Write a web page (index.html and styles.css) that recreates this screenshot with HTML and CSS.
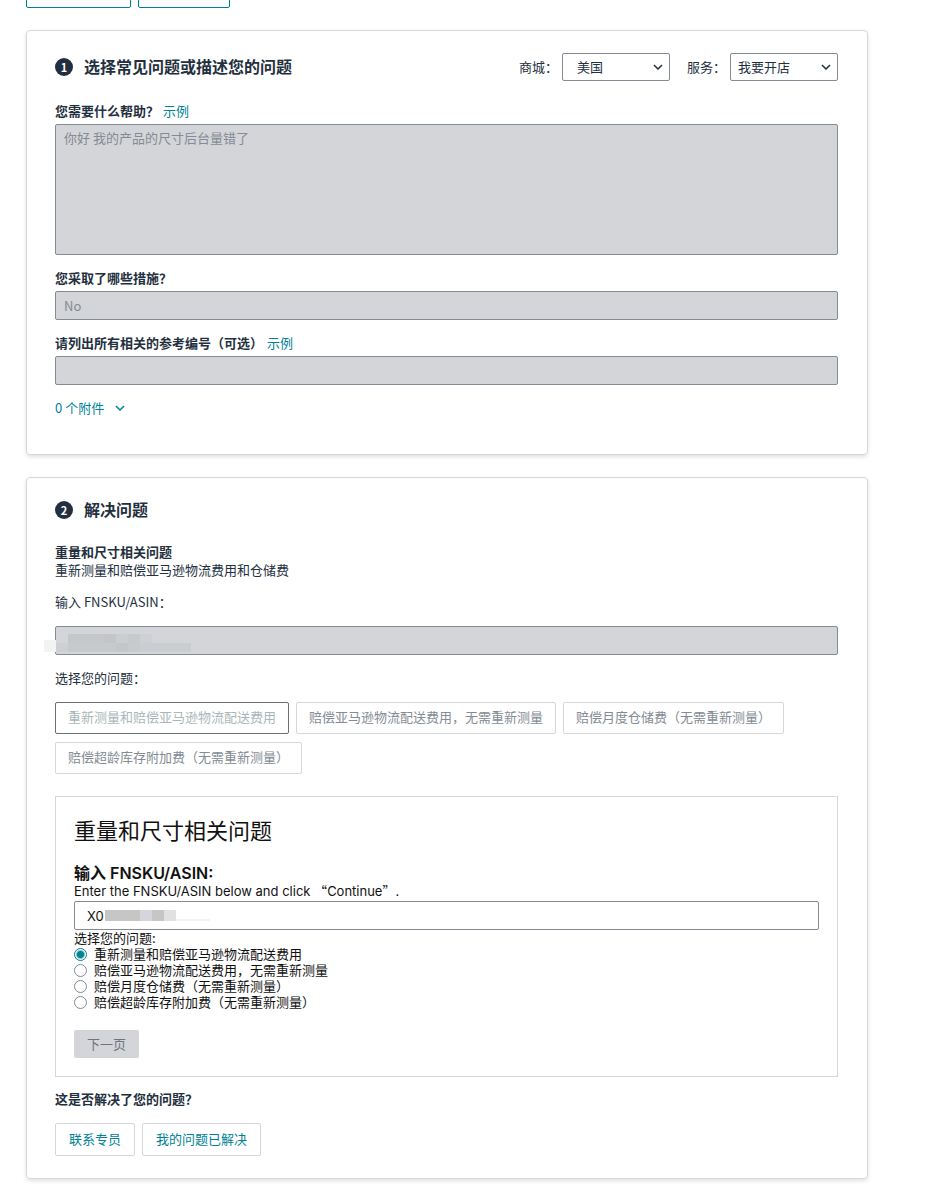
FILE: index.html
```html
<!DOCTYPE html>
<html lang="zh-CN">
<head>
    <meta charset="UTF-8">
    <meta name="viewport" content="width=device-width, initial-scale=1.0">
    <title>获取支持</title>
    <link rel="stylesheet" href="styles.css">
</head>
<body>
    <main class="page">
        <div class="top-actions">
            <button type="button" class="btn-top btn-top-wide" aria-label="返回"></button>
            <button type="button" class="btn-top" aria-label="帮助"></button>
        </div>

        <section class="card card-describe">
            <div class="card-header">
                <span class="step">1</span>
                <h2>选择常见问题或描述您的问题</h2>
                <div class="filters">
                    <label for="store">商城：</label>
                    <div class="select-wrap">
                        <select id="store" class="indent"><option>美国</option></select>
                        <svg class="chevron" viewBox="0 0 10 6" width="10" height="6"><path d="M1 1l4 4 4-4"/></svg>
                    </div>
                    <label for="service">服务：</label>
                    <div class="select-wrap">
                        <select id="service"><option>我要开店</option></select>
                        <svg class="chevron" viewBox="0 0 10 6" width="10" height="6"><path d="M1 1l4 4 4-4"/></svg>
                    </div>
                </div>
            </div>

            <div class="field">
                <div class="field-label"><label for="help">您需要什么帮助？</label><a href="#">示例</a></div>
                <textarea id="help" disabled>你好 我的产品的尺寸后台量错了</textarea>
            </div>
            <div class="field">
                <div class="field-label"><label for="steps">您采取了哪些措施？</label></div>
                <input type="text" id="steps" value="No" disabled>
            </div>
            <div class="field">
                <div class="field-label"><label for="refs">请列出所有相关的参考编号（可选）</label><a href="#">示例</a></div>
                <input type="text" id="refs" disabled>
            </div>
            <a href="#" class="attachments">0 个附件
                <svg class="chevron-link" viewBox="0 0 10 6" width="10" height="6"><path d="M1 1l4 4 4-4"/></svg>
            </a>
        </section>

        <section class="card card-solve">
            <div class="card-header">
                <span class="step">2</span>
                <h2>解决问题</h2>
            </div>

            <h3>重量和尺寸相关问题</h3>
            <p>重新测量和赔偿亚马逊物流费用和仓储费</p>

            <label for="asin" class="asin-label">输入 FNSKU/ASIN：</label>
            <div class="masked">
                <input type="text" id="asin" disabled>
                <svg class="mask-disabled" viewBox="0 0 147 18" width="147" height="18">
                    <rect x="0" y="6" width="12" height="12" fill="#f3f3f4"/>
                    <rect x="24" y="0" width="36" height="9" fill="#c4c8cb"/>
                    <rect x="60" y="0" width="12" height="9" fill="#c4c5c9"/>
                    <rect x="72" y="0" width="12" height="9" fill="#caced1"/>
                    <rect x="84" y="0" width="12" height="9" fill="#c6cacd"/>
                    <rect x="96" y="0" width="12" height="9" fill="#cdd0d4"/>
                    <rect x="12" y="9" width="12" height="9" fill="#cdcfd3"/>
                    <rect x="24" y="9" width="48" height="9" fill="#c6cacd"/>
                    <rect x="72" y="9" width="12" height="9" fill="#c3c7ca"/>
                    <rect x="84" y="9" width="12" height="9" fill="#c7cbce"/>
                    <rect x="96" y="9" width="51" height="9" fill="#cbced1"/>
                </svg>
            </div>

            <p class="issue-title">选择您的问题：</p>
            <div class="issues">
                <button type="button" class="btn issue selected">重新测量和赔偿亚马逊物流配送费用</button>
                <button type="button" class="btn issue">赔偿亚马逊物流配送费用，无需重新测量</button>
                <button type="button" class="btn issue">赔偿月度仓储费（无需重新测量）</button>
                <button type="button" class="btn issue">赔偿超龄库存附加费（无需重新测量）</button>
            </div>

            <form class="panel">
                <h1>重量和尺寸相关问题</h1>
                <label for="fnsku" class="panel-label">输入 FNSKU/ASIN:</label>
                <p class="hint">Enter the FNSKU/ASIN below and click <span class="quote">“</span>Continue<span class="quote">”</span>.</p>
                <div class="masked">
                    <input type="text" id="fnsku" class="fnsku" value="X0">
                    <svg class="mask-code" viewBox="0 0 105 11" width="105" height="11">
                        <rect x="0" y="0" width="35" height="11" fill="#c7c6c6"/>
                        <rect x="35" y="0" width="12" height="11" fill="#d5d6db"/>
                        <rect x="47" y="0" width="12" height="11" fill="#c5c6c5"/>
                        <rect x="59" y="0" width="12" height="11" fill="#e0e1e1"/>
                        <rect x="71" y="9" width="34" height="2" fill="#f3f3f3"/>
                    </svg>
                </div>
                <fieldset>
                    <legend>选择您的问题:</legend>
                    <label><input type="radio" name="issue" checked>重新测量和赔偿亚马逊物流配送费用</label>
                    <label><input type="radio" name="issue">赔偿亚马逊物流配送费用，无需重新测量</label>
                    <label><input type="radio" name="issue">赔偿月度仓储费（无需重新测量）</label>
                    <label><input type="radio" name="issue">赔偿超龄库存附加费（无需重新测量）</label>
                </fieldset>
                <button type="submit" class="next" disabled>下一页</button>
            </form>

            <h3>这是否解决了您的问题？</h3>
            <div class="answers">
                <button type="button" class="btn answer">联系专员</button>
                <button type="button" class="btn answer">我的问题已解决</button>
            </div>
        </section>
    </main>
</body>
</html>
```
FILE: styles.css
```css
* {
    box-sizing: border-box;
}

body {
    margin: 0;
    background-color: #fff;
    color: #232f3e;
    font-family: "Noto Sans CJK SC", sans-serif;
    font-size: 13px;
    line-height: 18px;
}

h1, h2, h3, p {
    margin: 0;
}

h3 {
    font-size: 13px;
    font-weight: bold;
}

a {
    color: #008296;
    text-decoration: none;
}

input, select, textarea, button {
    font: inherit;
    color: inherit;
}

.page {
    padding: 0 59px 20px 26px;
}

/* Buttons scrolled half out of view */
.top-actions {
    display: flex;
    gap: 7px;
    margin-top: -24px;
    margin-bottom: 22px;
}

.btn-top {
    width: 92px;
    height: 32px;
    background-color: #fff;
    border: 1px solid #008296;
    border-radius: 2px;
}

.btn-top-wide {
    width: 105px;
}

/* Cards */
.card {
    padding: 22px 29px 22px 28px;
    border: 1px solid #d5d7d9;
    border-radius: 4px;
    box-shadow: 0 2px 4px rgba(0, 0, 0, 0.12);
}

.card-describe {
    padding-bottom: 37px;
    margin-bottom: 22px;
}

.card-header {
    display: flex;
    align-items: center;
    margin-bottom: 21px;
}

.card-header h2 {
    margin-left: 11px;
    padding-bottom: 2px;
    font-size: 16px;
    font-weight: bold;
    line-height: 18px;
}

.step {
    width: 18px;
    height: 18px;
    border-radius: 50%;
    background-color: #232f3e;
    color: #fff;
    font-size: 11px;
    font-weight: bold;
    line-height: 18px;
    text-align: center;
}

.filters {
    display: flex;
    align-items: center;
    gap: 4px;
    margin-left: auto;
}

.select-wrap {
    position: relative;
}

.select-wrap + label {
    margin-left: 13px;
}

select {
    display: block;
    width: 108px;
    height: 28px;
    padding: 0 24px 1px 7px;
    appearance: none;
    background-color: #fff;
    border: 1px solid #848b94;
    border-radius: 2px;
}

select.indent {
    padding-left: 14px;
}

.chevron {
    position: absolute;
    top: 11px;
    right: 7px;
    pointer-events: none;
}

.chevron path, .chevron-link path {
    fill: none;
    stroke: #232f3e;
    stroke-width: 1.5;
}

.chevron-link path {
    stroke: #008296;
}

/* Fields */
.field {
    margin-bottom: 14px;
}

.field-label {
    display: flex;
    gap: 4px;
    margin-bottom: 4px;
}

.field-label label {
    font-weight: bold;
}

input[type="text"], textarea {
    display: block;
    width: 100%;
    border: 1px solid #848b94;
    border-radius: 2px;
    padding: 0 8px;
}

input[type="text"] {
    height: 29px;
}

textarea {
    height: 131px;
    padding-top: 4px;
    resize: none;
}

input:disabled, textarea:disabled {
    background-color: #d4d5d9;
    color: #848b94;
}

.attachments {
    display: inline-flex;
    align-items: center;
    gap: 11px;
}

.masked {
    position: relative;
}

.mask-disabled {
    position: absolute;
    top: 8px;
    left: -11px;
}

.mask-code {
    position: absolute;
    top: 9px;
    left: 31px;
}

/* Solve card */
.card-solve .card-header {
    margin-bottom: 23px;
}

.asin-label {
    display: block;
    margin: 14px 0 15px;
}

.issue-title {
    margin: 14px 0 15px;
}

.issues, .answers {
    display: flex;
    flex-wrap: wrap;
    gap: 8px 7px;
}

.btn {
    height: 32px;
    padding: 0 13px 2px;
    background-color: #fff;
    border: 1px solid #d5d7d9;
    border-radius: 2px;
}

.issue {
    padding: 0 12px 2px;
    color: #848b94;
}

.selected {
    border-color: #6b7075;
    color: #aab7b8;
}

.answer {
    height: 33px;
    color: #008296;
}

.panel {
    margin: 22px 0 13px;
    padding: 18px;
    border: 1px solid #d5d7d9;
    color: #111;
    line-height: 16px;
}

.panel h1 {
    margin-bottom: 20px;
    font-size: 22px;
    font-weight: normal;
    line-height: 28px;
}

.panel-label {
    display: block;
    font-family: Inter, "Noto Sans CJK SC", sans-serif;
    font-size: 16px;
    font-weight: 600;
    line-height: 20px;
}

.hint {
    margin-bottom: 2px;
    font-family: Inter, "Noto Sans CJK SC", sans-serif;
}

.quote {
    font-family: "Noto Sans CJK SC", sans-serif;
    line-height: 1;
}

.panel .fnsku {
    padding: 0 12px;
    font-family: Inter, sans-serif;
}

fieldset {
    margin: 0 0 20px;
    padding: 0;
    border: 0;
}

legend {
    padding: 0;
}

fieldset label {
    display: flex;
    align-items: center;
    gap: 7px;
}

input[type="radio"] {
    appearance: none;
    width: 13px;
    height: 13px;
    margin: 0;
    border: 1px solid #848b94;
    border-radius: 50%;
    background-color: #fff;
}

input[type="radio"]:checked {
    border-color: #008296;
    background: radial-gradient(#008296 0 3px, #fff 5px);
}

.next {
    display: block;
    height: 28px;
    padding: 0 13px;
    background-color: #d4d5d9;
    border: 0;
    border-radius: 2px;
    color: #6c7480;
}

.answers {
    margin-top: 15px;
}
```
